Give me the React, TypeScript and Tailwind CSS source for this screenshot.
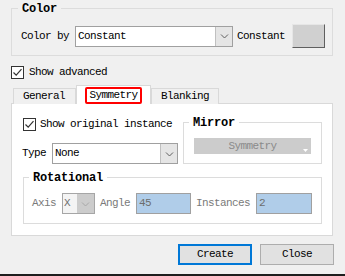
import React from 'react';

const Chevron = ({ color = '#606060' }: { color?: string }) => (
  <svg width="9" height="6" viewBox="0 0 9 6" aria-hidden="true">
    <path d="M1 1.5 L4.5 5 L8 1.5" fill="none" stroke={color} strokeWidth={1} />
  </svg>
);

const CheckBox = () => (
  <span className="w-[13px] h-[13px] border border-[#333333] bg-white flex items-center justify-center shrink-0">
    <svg width="11" height="11" viewBox="0 0 11 11" aria-hidden="true">
      <path d="M1.5 5.5 L4.2 8.2 L9.5 2.2" fill="none" stroke="#333333" strokeWidth={1.2} />
    </svg>
  </span>
);

const Group = ({
  title,
  className,
  children,
}: {
  title: string;
  className: string;
  children: React.ReactNode;
}) => (
  <div className={`relative border border-[#dcdcdc] ${className}`}>
    <span className="absolute -top-[7px] px-[4px] bg-inherit text-[12px] font-bold tracking-[-0.2px] leading-[14px] text-black left-[5px]">
      {title}
    </span>
    {children}
  </div>
);

const Combo = ({ value, width }: { value: string; width: string }) => (
  <div className={`flex h-[21px] border border-[#a0a0a0] bg-white ${width}`}>
    <span className="flex-1 pl-[2px] leading-[19px]">{value}</span>
    <span className="w-[17px] bg-[#e5e5e5] border-l border-[#c0c0c0] flex items-center justify-center">
      <Chevron />
    </span>
  </div>
);

export default function App() {
  return (
    <div className="w-[345px] h-[276px] bg-[#f0f0f0] flex flex-col overflow-hidden text-[11px] tracking-[-0.6px] text-black font-[family-name:'Liberation_Mono',monospace]">
      {/* Color */}
      <Group title="Color" className="mt-[8px] ml-[11px] w-[322px] h-[48px] bg-[#f0f0f0] [&>span:first-child]:left-[6px]">
        <div className="flex items-center h-[24px] mt-[15px] pl-[9px]">
          <span>Color by</span>
          <div className="ml-[6px]">
            <Combo value="Constant" width="w-[158px]" />
          </div>
          <span className="ml-[4px]">Constant</span>
          <span className="ml-[7px] w-[33px] h-[24px] bg-[#d0d0d0] border border-t-[#e6e6e6] border-l-[#e6e6e6] border-r-[#5f5f5f] border-b-[#5f5f5f]" />
        </div>
      </Group>

      {/* Show advanced */}
      <div className="flex items-center gap-[5px] ml-[11px] mt-[10px] h-[13px]">
        <CheckBox />
        <span>Show advanced</span>
      </div>

      {/* Tabs */}
      <div className="flex items-end h-[19px] mt-[6px] ml-[13px] -mb-px relative z-10">
        <div className="w-[63px] h-[16px] border border-b-0 border-[#d9d9d9] bg-[#f0f0f0] pl-[9px] leading-[15px]">
          General
        </div>
        <div className="w-[75px] h-[19px] border border-b-0 border-[#d9d9d9] bg-white flex justify-center pt-[1px]">
          <span className="h-[17px] px-[2px] border-2 border-[#ff0000] rounded-[2px] leading-[13px]">
            Symmetry
          </span>
        </div>
        <div className="w-[68px] h-[16px] border border-b-0 border-[#d9d9d9] bg-[#f0f0f0] pl-[9px] leading-[15px]">
          Blanking
        </div>
      </div>

      <div className="ml-[11px] w-[322px] h-[133px] border border-[#d9d9d9] bg-white pt-[14px] pl-[11px] pr-[10px]">
        <div className="flex items-start">
          <div className="w-[160px]">
            <div className="flex items-center gap-[4px] h-[13px]">
              <CheckBox />
              <span>Show original instance</span>
            </div>
            <div className="flex items-center mt-[12px] -ml-[1px]">
              <span className="w-[30px]">Type</span>
              <Combo value="None" width="w-[126px]" />
            </div>
          </div>
          <Group title="Mirror" className="mt-[4px] w-[139px] h-[42px] bg-white">
            <div className="mt-[15px] ml-[10px] w-[117px] h-[16px] bg-[#cccccc] relative flex items-center justify-center text-[#8a8a8a] leading-[16px]">
              Symmetry
              <svg className="absolute right-[3px] bottom-[2px]" width="5" height="3" viewBox="0 0 5 3" aria-hidden="true">
                <path d="M0 0 H5 L2.5 3 Z" fill="#ffffff" />
              </svg>
            </div>
          </Group>
        </div>

        <Group title="Rotational" className="mt-[13px] w-[299px] h-[47px] bg-white">
          <div className="flex items-center h-[21px] mt-[15px] pl-[8px] text-[#7a7a7a]">
            <span>Axis</span>
            <div className="ml-[6px] flex h-[21px] w-[33px] border border-[#a6a6a6]">
              <span className="w-[14px] bg-[#f4f4f4] pl-[1px] leading-[19px] text-[#6d6d6d]">X</span>
              <span className="flex-1 bg-[#cccccc] flex items-center justify-center">
                <Chevron color="#a8a8a8" />
              </span>
            </div>
            <span className="ml-[5px]">Angle</span>
            <span className="ml-[6px] w-[55px] h-[21px] bg-[#b0cde9] border border-[#a0a0a0] pl-[2px] leading-[19px] text-[#6d6d6d]">
              45
            </span>
            <span className="ml-[5px]">Instances</span>
            <span className="ml-[6px] w-[56px] h-[21px] bg-[#b0cde9] border border-[#a0a0a0] pl-[2px] leading-[19px] text-[#6d6d6d]">
              2
            </span>
          </div>
        </Group>
      </div>

      {/* Buttons */}
      <div className="flex justify-end gap-[8px] mt-[8px] pr-[11px]">
        <button className="w-[74px] h-[21px] bg-[#e1e1e1] border-2 border-[#0078d7] leading-[17px]">
          Create
        </button>
        <button className="w-[74px] h-[21px] bg-[#e1e1e1] border border-[#adadad] leading-[19px]">
          Close
        </button>
      </div>

      <div className="mt-auto h-[2px] bg-[#1e1e1e]" />
    </div>
  );
}
